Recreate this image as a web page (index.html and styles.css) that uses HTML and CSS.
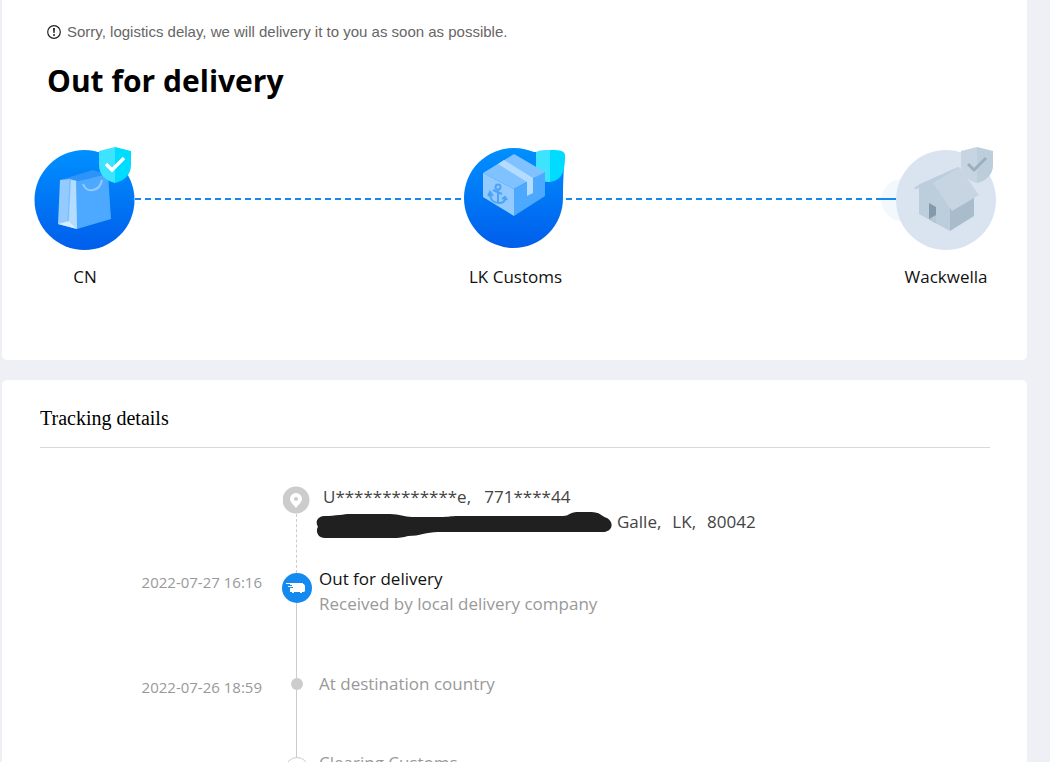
FILE: index.html
```
<!DOCTYPE html>
<html lang="en">
<head>
    <meta charset="UTF-8">
    <meta name="viewport" content="width=device-width, initial-scale=1.0">
    <title>Tracking</title>
    <link rel="stylesheet" href="styles.css">
</head>
<body>
    <main>
        <section class="card status">
            <p class="notice">
                <svg width="14" height="14" viewBox="0 0 14 14">
                    <circle cx="7" cy="7" r="6.3" fill="none" stroke="#222" stroke-width="1.2"/>
                    <path d="M6 3h2l-.4 5H6.400z" fill="#222"/>
                    <circle cx="7" cy="10" r="1" fill="#222"/>
                </svg>
                Sorry, logistics delay, we will delivery it to you as soon as possible.
            </p>
            <h1>Out for delivery</h1>
            <div class="steps">
                <div class="step">
                    <svg width="100" height="104" viewBox="0 0 100 104">
                        <defs>
                            <linearGradient id="blue" x1="0" y1="0" x2="0" y2="1">
                                <stop offset="0" stop-color="#0090ff"/>
                                <stop offset="1" stop-color="#005eeb"/>
                            </linearGradient>
                        </defs>
                        <circle cx="49.500" cy="54" r="50" fill="url(#blue)"/>
                        <!-- bag -->
                        <path d="M25 34L58 24 74 29 42 36z" fill="#2c93f8"/>
                        <path d="M25 34l10-1 7 2v48L23 78z" fill="#93cbff"/>
                        <path d="M35 34L33 76" stroke="#6bb4fb" stroke-width=".7"/>
                        <path d="M23 78L34 75 42 83z" fill="#d6ecff"/>
                        <path d="M40 36L73 28 76 73 42 83z" fill="#4ca9ff"/>
                        <path d="M36 34l5 1 1 48-8-8z" fill="#b4dcff"/>
                        <path d="M48 38c2 5 5 7 10 6 5-1 8-4 9-10" fill="none" stroke="#93cbff" stroke-width="2"/>
                        <!-- shield -->
                        <path d="M80 1L64 5v14c0 10 7 16 16 18z" fill="#3de3ff"/>
                        <path d="M80 1l16 4v14c0 10-7 16-16 18z" fill="#00dcff"/>
                        <path d="M71 18l6 6 12-12" fill="none" stroke="#fff" stroke-width="3.500"/>
                    </svg>
                    <span>CN</span>
                </div>
                <div class="line"></div>
                <div class="step">
                    <svg width="100" height="104" viewBox="2 0 100 104">
                        <path d="M50 2c8 0 14 2 20 4h22c5 0 8 2 8 7 0 12-1 20-1 39a49.500 50 0 1 1-49-50z" fill="url(#blue)"/>
                        <!-- shield -->
                        <path d="M86 4c-6 0-10 0-14 2v24c3 4 8 6 14 6z" fill="#3de3ff"/>
                        <path d="M86 4c12 0 15 1 15 6 0 16-3 24-15 26z" fill="#00dcff"/>
                        <!-- box -->
                        <path d="M19 27L50 8l31 18-31 17z" fill="#7fc2ff"/>
                        <path d="M19 27l31 16v27L19 51z" fill="#93cbff"/>
                        <path d="M50 43l31-17v24L50 70z" fill="#4ca9ff"/>
                        <path d="M40 14l29 18v15l-6 3V36L34 18z" fill="#b4dcff"/>
                        <!-- anchor -->
                        <g fill="none" stroke="#4ca3f8" stroke-width="2">
                            <circle cx="34" cy="41" r="2.500"/>
                            <path d="M34 44v13M29 44l9 4M26 47c0 7 4 10 9 10 4 0 6-2 6-5M24 50l2-4 3 4M38 53l3-2 2 3"/>
                        </g>
                    </svg>
                    <span>LK Customs</span>
                </div>
                <div class="line"></div>
                <div class="step">
                    <svg width="100" height="104" viewBox="0 0 100 104">
                        <circle cx="6" cy="54" r="21" fill="#1489f0" fill-opacity=".06"/>
                        <path d="M-14 53H0" stroke="#1489f0" stroke-width="2"/>
                        <circle cx="50" cy="54" r="50" fill="#dae4f0"/>
                        <!-- house -->
                        <path d="M23 41l14-5 17 24v25L23 68z" fill="#bccddc"/>
                        <path d="M54 60l24-12v22L54 85z" fill="#a9bccb"/>
                        <path d="M18 42l6-4 38-17 4 3-29 15-18 4z" fill="#bccddb"/>
                        <path d="M37 37l26-16 20 28-27 16z" fill="#c7d5e2"/>
                        <path d="M33 57l7 4v16l-7-4z" fill="#8499aa"/>
                        <path d="M33 73l7-4v8z" fill="#b6c8d7"/>
                        <!-- shield -->
                        <path d="M81 1L65 5v14c0 10 7 16 16 18z" fill="#c7d5e2"/>
                        <path d="M81 1l16 4v14c0 10-7 16-16 18z" fill="#bccddb"/>
                        <path d="M72 18l6 6 12-12" fill="none" stroke="#9bafbf" stroke-width="3"/>
                    </svg>
                    <span>Wackwella</span>
                </div>
            </div>
        </section>

        <section class="card details">
            <h2>Tracking details</h2>
            <ol class="timeline">
                <li class="address">
                    <span></span>
                    <div class="node">
                        <svg width="28" height="28" viewBox="0 0 28 28">
                            <circle cx="13" cy="14" r="13.500" fill="#ccc"/>
                            <path d="M13 22c-3-4-6-6-6-9a6 6 0 0 1 12 0c0 3-3 5-6 9z" fill="#fff"/>
                            <circle cx="13" cy="13" r="2" fill="#ccc"/>
                        </svg>
                    </div>
                    <div class="info">
                        <p>U*************e,&nbsp;&nbsp; 771****44</p>
                        <p class="place">
                            <svg width="296" height="28" viewBox="0 0 296 28">
                                <path d="M8 5C20 5 28 3 34 3h40c10 0 14 3 22 3h28c10 0 10-1 18-1h105c6 0 7-4 14-4h14c9 0 10 4 16 6 7 4 6 13-3 14H122c-12 0-18 4-30 4-8 2-10 2-18 2H9c-9 0-9-9-7-11-3-5-1-10 6-11z" fill="#202020"/>
                            </svg>
                            <span>Galle,</span>
                            <span>LK,</span>
                            <span>80042</span>
                        </p>
                    </div>
                </li>
                <li>
                    <time>2022-07-27 16:16</time>
                    <div class="node">
                        <svg width="30" height="30" viewBox="0 0 30 30">
                            <circle cx="15" cy="15" r="15" fill="#1489f0"/>
                            <path d="M10 10h11v1h1l1 2v5l-1 1h-2v1h-2v-1h-6v1h-2v-1H8v-4h3v-1H6v-1h4v-1H8v-1H4v-1h6z" fill="#fff"/>
                        </svg>
                    </div>
                    <div class="info">
                        <h3>Out for delivery</h3>
                        <p>Received by local delivery company</p>
                    </div>
                </li>
                <li class="past">
                    <time>2022-07-26 18:59</time>
                    <div class="node"><i class="dot"></i></div>
                    <div class="info"><p>At destination country</p></div>
                </li>
                <li class="past">
                    <span></span>
                    <div class="node"><i class="ring"></i></div>
                    <div class="info"><p>Clearing Customs</p></div>
                </li>
            </ol>
        </section>
    </main>
</body>
</html>
```
FILE: styles.css
```
*{
    margin: 0;
    padding: 0;
    box-sizing: border-box;
}
body {
    background: #eff0f5;
    font-family: "Open Sans", "Noto Sans", sans-serif;
    font-size: 17px;
    line-height: 25px;
    color: #111;
}
main {
    padding: 0 23px 0 2px;
}
.card {
    background: #fff;
    border-radius: 5px;
}
.status {
    padding: 22px 31px 70px 33px;
    border-radius: 0 0 5px 5px;
}
.notice {
    display: flex;
    align-items: center;
    gap: 6px;
    padding-left: 12px;
    font-family: "Liberation Sans", Arial, sans-serif;
    font-size: 15px;
    line-height: 20px;
    color: #666;
}
h1 {
    padding: 18px 12px 0;
    font-size: 30px;
    line-height: 42px;
    color: #000;
}
.steps {
    display: flex;
    align-items: flex-start;
    margin-top: 44px;
}
.step {
    display: flex;
    flex-direction: column;
    align-items: center;
    gap: 14px;
    width: 100px;
    white-space: nowrap;
}
.step svg {
    overflow: visible;
}
.step span {
    line-height: 26px;
}
.line {
    flex: 1;
    height: 2px;
    margin-top: 52px;
    background: repeating-linear-gradient(to right, #1489f0 0 6px, transparent 6px 10px);
}
.details {
    margin-top: 20px;
    padding: 24px 37px 24px 38px;
}
h2 {
    padding-bottom: 15px;
    border-bottom: 1px solid #d8d8d8;
    font-family: "Liberation Serif", "Times New Roman", serif;
    font-size: 20px;
    font-weight: normal;
    line-height: 28px;
    color: #000;
}
.timeline {
    margin-top: 38px;
    list-style: none;
}
.timeline li {
    display: grid;
    grid-template-columns: 222px 30px 1fr;
    column-gap: 20px;
    min-height: 105px;
}
.timeline .address {
    min-height: 87px;
}
.timeline .past {
    min-height: 79px;
}
time {
    margin-top: -1px;
    font-size: 15px;
    line-height: 20px;
    text-align: right;
    color: #999;
}
.node {
    display: flex;
    flex-direction: column;
    align-items: center;
}
.node::after {
    content: "";
    flex: 1;
    margin-right: 1px;
    border-left: 1px solid #ccc;
}
.address .node::after {
    border-left-style: dashed;
}
.dot {
    width: 12px;
    height: 12px;
    border-radius: 50%;
    background: #ccc;
}
.ring {
    width: 24px;
    height: 24px;
    border: 1px solid #ccc;
    border-radius: 50%;
}
.info {
    margin: -7px 0 0 -13px;
    color: #999;
}
.address .info {
    margin-top: -2px;
    color: #444;
}
.address .info > p:first-child {
    padding-left: 4px;
}
.place {
    display: flex;
    align-items: flex-start;
    gap: 11px;
    margin-left: -3px;
}
.place svg {
    margin: 2px -6px 0 0;
}
h3 {
    font-size: 17px;
    font-weight: normal;
    color: #111;
}
```
